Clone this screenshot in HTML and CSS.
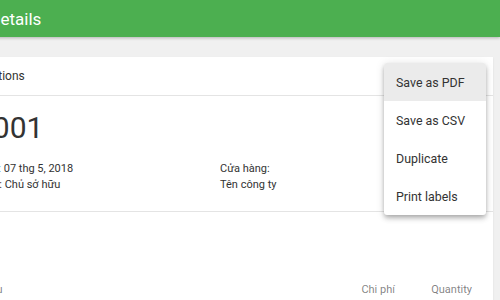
FILE: index.html
```html
<!DOCTYPE html>
<html lang="vi">
<head>
    <meta charset="UTF-8">
    <meta name="viewport" content="width=device-width, initial-scale=1.0">
    <title>Order details</title>
    <link rel="stylesheet" href="styles.css">
</head>
<body>
    <div class="page">
        <header class="toolbar">
            <h1 class="toolbar-title">Order details</h1>
        </header>

        <main class="main">
            <section class="card">
                <div class="card-header">Export options</div>

                <div class="summary">
                    <div class="order-number">ĐH-001</div>
                    <div class="info-grid">
                        <div class="info-col">
                            <div>Order date: 07 thg 5, 2018</div>
                            <div>Created by: Chủ sở hữu</div>
                        </div>
                        <div class="info-col">
                            <div>Cửa hàng:</div>
                            <div>Tên công ty</div>
                        </div>
                    </div>
                </div>

                <div class="items">
                    <div class="items-head">
                        <span class="col-name">Tên vật liệu</span>
                        <span class="col-cost">Chi phí</span>
                        <span class="col-qty">Quantity</span>
                    </div>
                </div>

                <ul class="menu">
                    <li class="menu-item active">Save as PDF</li>
                    <li class="menu-item">Save as CSV</li>
                    <li class="menu-item">Duplicate</li>
                    <li class="menu-item">Print labels</li>
                </ul>
            </section>
        </main>
    </div>
</body>
</html>
```

FILE: styles.css
```css
body {
    margin: 0;
    padding: 0;
    font-family: Roboto, "Liberation Sans", Arial, sans-serif;
    background-color: #f0f0f0;
    color: #333;
    overflow: hidden;
}

.page {
    margin-left: -65px;
}

.toolbar {
    height: 37px;
    display: flex;
    align-items: center;
    padding-left: 10px;
    background-color: #4caf50;
    box-shadow: 0 1px 3px rgba(0, 0, 0, 0.25);
    position: relative;
}

.toolbar-title {
    margin: 0;
    font-size: 17px;
    font-weight: 400;
    color: #fff;
}

.main {
    padding: 20px 7px 0 0;
}

.card {
    position: relative;
    background-color: #fff;
    height: 260px;
    box-shadow: 0 1px 2px rgba(0, 0, 0, 0.08);
}

.card-header {
    height: 38px;
    display: flex;
    align-items: center;
    padding: 0 12px;
    font-size: 12px;
    border-bottom: 1px solid #e4e4e4;
}

.summary {
    padding: 14px 12px 18px;
    border-bottom: 1px solid #e4e4e4;
}

.order-number {
    font-size: 30px;
    line-height: 36px;
    margin-left: -4px;
    color: #333;
}

.info-grid {
    display: grid;
    grid-template-columns: 273px 1fr;
    margin-top: 15px;
    font-size: 11px;
    line-height: 16px;
}

.items {
    padding: 70px 21px 0 12px;
}

.items-head {
    display: flex;
    font-size: 11px;
    line-height: 16px;
    color: rgba(0, 0, 0, 0.5);
}

.col-name {
    flex: 1;
}

.col-cost {
    width: 80px;
    text-align: right;
}

.col-qty {
    width: 77px;
    text-align: right;
}

.menu {
    position: absolute;
    top: 6px;
    right: 7px;
    width: 102px;
    margin: 0;
    padding: 0;
    list-style: none;
    background-color: #fff;
    border-radius: 3px;
    overflow: hidden;
    box-shadow: 0 2px 4px -1px rgba(0, 0, 0, 0.2), 0 4px 5px 0 rgba(0, 0, 0, 0.14), 0 1px 10px 0 rgba(0, 0, 0, 0.12);
}

.menu-item {
    height: 38px;
    display: flex;
    align-items: center;
    padding: 0 12px;
    font-size: 12.4px;
    color: #333;
}

.menu-item.active {
    background-color: #ebebeb;
}
```
